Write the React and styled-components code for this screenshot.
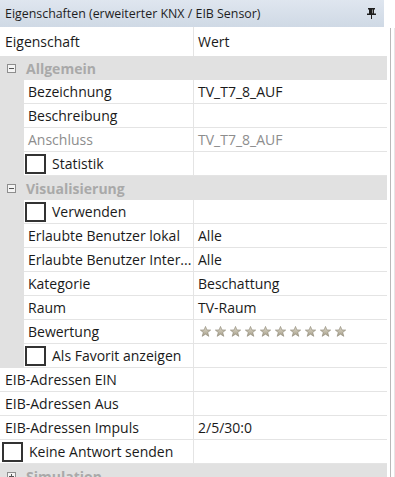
import React from "react";
import styled, { createGlobalStyle } from "styled-components";

const GlobalStyle = createGlobalStyle`
  body {
    margin: 0;
    background: #ffffff;
    font-family: "Open Sans", "Liberation Sans", sans-serif;
    color: #1e1e1e;
  }
`;

const Page = styled.div`
  display: flex;
  align-items: flex-start;
  width: 395px;
  height: 477px;
  overflow: hidden;
  background: #ffffff;
`;

const Panel = styled.div`
  width: 387px;
  flex: none;
  display: flex;
  flex-direction: column;
`;

const SideStrip = styled.div`
  flex: 1;
  align-self: stretch;
  margin-top: 28px;
  margin-left: 3px;
  border-left: 1px solid #b9b9b9;
  border-right: 1px solid #e6e6e6;
`;

const TitleBar = styled.div`
  height: 27px;
  width: 384px;
  flex: none;
  display: flex;
  align-items: center;
  justify-content: space-between;
  padding: 0 8px 0 5px;
  box-sizing: border-box;
  background: linear-gradient(#dfe6ef, #cfd9e5);
  font-size: 12.4px;
  color: #1e1e1e;
`;

const Row = styled.div`
  display: flex;
  flex: none;
  height: ${(p) => (p.$tall ? "29px" : "24px")};
  font-size: 14px;
`;

const Gutter = styled.div`
  width: 24px;
  flex: none;
  background: #e1e1e1;
`;

const NameCell = styled.div`
  width: ${(p) => (p.$nested ? "169px" : "193px")};
  flex: none;
  display: flex;
  align-items: center;
  gap: 6px;
  padding-left: ${(p) => (p.$check ? (p.$nested ? "1px" : "2px") : p.$nested ? "4px" : "5px")};
  box-sizing: border-box;
  border-bottom: ${(p) => (p.$noLine ? "none" : "1px solid #e4e4e4")};
  color: ${(p) => (p.$muted ? "#8d8d8d" : "#1a1a1a")};
  white-space: nowrap;
  overflow: hidden;
`;

const ValueCell = styled.div`
  flex: 1;
  display: flex;
  align-items: center;
  padding-left: 4px;
  box-sizing: border-box;
  border-left: 1px solid #e4e4e4;
  border-bottom: ${(p) => (p.$noLine ? "none" : "1px solid #e4e4e4")};
  color: ${(p) => (p.$muted ? "#8d8d8d" : "#1a1a1a")};
`;

const CategoryRow = styled.div`
  display: flex;
  flex: none;
  align-items: center;
  height: 24px;
  background: #e1e1e1;
  padding-left: 7px;
  gap: 10px;
  font-size: 14px;
  font-weight: 700;
  color: #a9a9a9;
`;

const ToggleBox = styled.span`
  width: 9px;
  height: 9px;
  box-sizing: border-box;
  border: 1px solid #8e8e8e;
  background: #f4f4f4;
  position: relative;
  flex: none;
  &::before {
    content: "";
    position: absolute;
    left: 1px;
    right: 1px;
    top: 3px;
    height: 1px;
    background: #555555;
  }
  &::after {
    content: "";
    position: absolute;
    display: ${(p) => (p.$open ? "none" : "block")};
    top: 1px;
    bottom: 1px;
    left: 3px;
    width: 1px;
    background: #555555;
  }
`;

const CheckBox = styled.span`
  width: 21px;
  height: 20px;
  box-sizing: border-box;
  border: 2px solid #333333;
  background: #ffffff;
  flex: none;
`;

const Stars = styled.div`
  display: flex;
  gap: 4px;
  padding-left: 2px;
`;

const Star = () => (
  <svg width="11" height="11" viewBox="0 0 10 10">
    <defs>
      <linearGradient id="sg" x1="0" y1="0" x2="0" y2="1">
        <stop offset="0" stopColor="#dcd7c8" />
        <stop offset="1" stopColor="#a8a18c" />
      </linearGradient>
    </defs>
    <polygon
      points="5,0.4 6.3,3.6 9.7,3.7 7,5.9 8,9.4 5,7.4 2,9.4 3,5.9 0.3,3.7 3.7,3.6"
      fill="url(#sg)"
      stroke="#8f8a78"
      strokeWidth="0.6"
    />
  </svg>
);

const PinIcon = () => (
  <svg width="9" height="11" viewBox="0 0 9 11">
    <rect x="1" y="0" width="7" height="1.5" fill="#1e1e1e" />
    <rect x="2" y="1" width="5" height="5" fill="#1e1e1e" />
    <rect x="5" y="1.5" width="1" height="4" fill="#8a8a8a" />
    <rect x="0" y="5.5" width="9" height="1.5" fill="#1e1e1e" />
    <rect x="4" y="7" width="1" height="4" fill="#1e1e1e" />
  </svg>
);

const Prop = ({ name, value, nested, muted }) => (
  <Row>
    {nested && <Gutter />}
    <NameCell $nested={nested} $muted={muted}>
      {name}
    </NameCell>
    <ValueCell $muted={muted}>{value}</ValueCell>
  </Row>
);

const CheckProp = ({ name, nested }) => (
  <Row>
    {nested && <Gutter />}
    <NameCell $nested={nested} $check>
      <CheckBox />
      {name}
    </NameCell>
    <ValueCell />
  </Row>
);

const Category = ({ title, open }) => (
  <CategoryRow>
    <ToggleBox $open={open} />
    {title}
  </CategoryRow>
);

export default function App() {
  return (
    <Page>
      <GlobalStyle />
      <Panel>
        <TitleBar>
          <span>Eigenschaften (erweiterter KNX / EIB Sensor)</span>
          <PinIcon />
        </TitleBar>
        <Row $tall>
          <NameCell $noLine>Eigenschaft</NameCell>
          <ValueCell $noLine>Wert</ValueCell>
        </Row>
        <Category title="Allgemein" open />
        <Prop nested name="Bezeichnung" value="TV_T7_8_AUF" />
        <Prop nested name="Beschreibung" value="" />
        <Prop nested muted name="Anschluss" value="TV_T7_8_AUF" />
        <CheckProp nested name="Statistik" />
        <Category title="Visualisierung" open />
        <CheckProp nested name="Verwenden" />
        <Prop nested name="Erlaubte Benutzer lokal" value="Alle" />
        <Prop nested name="Erlaubte Benutzer Inter..." value="Alle" />
        <Prop nested name="Kategorie" value="Beschattung" />
        <Prop nested name="Raum" value="TV-Raum" />
        <Prop
          nested
          name="Bewertung"
          value={
            <Stars>
              {Array.from({ length: 10 }).map((_, i) => (
                <Star key={i} />
              ))}
            </Stars>
          }
        />
        <CheckProp nested name="Als Favorit anzeigen" />
        <Prop name="EIB-Adressen EIN" value="" />
        <Prop name="EIB-Adressen Aus" value="" />
        <Prop name="EIB-Adressen Impuls" value="2/5/30:0" />
        <CheckProp name="Keine Antwort senden" />
        <Category title="Simulation" />
      </Panel>
      <SideStrip />
    </Page>
  );
}
